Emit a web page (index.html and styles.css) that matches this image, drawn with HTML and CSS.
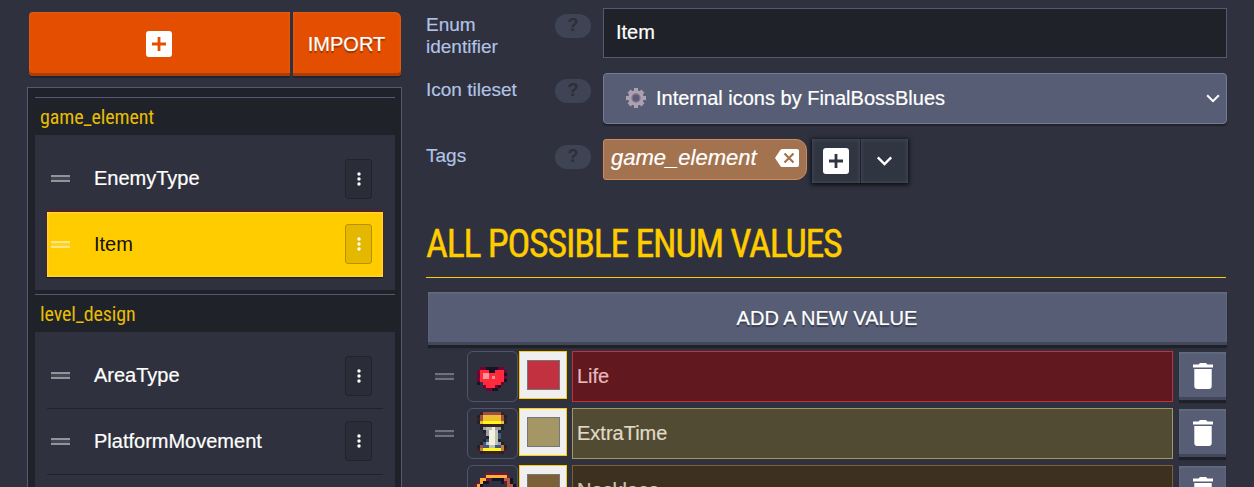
FILE: index.html
```html
<!DOCTYPE html>
<html lang="en">
<head>
<meta charset="utf-8">
<title>Enums</title>
<link rel="stylesheet" href="styles.css">
</head>
<body>
<svg class="defs" width="0" height="0">
  <symbol id="add" viewBox="0 0 26 26"><path fill-rule="evenodd" d="M3 0H23a3 3 0 0 1 3 3V23a3 3 0 0 1-3 3H3a3 3 0 0 1-3-3V3A3 3 0 0 1 3 0ZM11.6 6v5.6H6v2.8h5.6V20h2.8v-5.6H20v-2.8h-5.6V6Z"/></symbol>
  <symbol id="dots" viewBox="0 0 4 14"><circle cx="2" cy="2" r="1.7"/><circle cx="2" cy="7" r="1.7"/><circle cx="2" cy="12" r="1.7"/></symbol>
  <symbol id="trash" viewBox="0 0 20 26"><path d="M0 1.5h5.5L7 0h6l1.500 1.500H20V4.500H0ZM1.300 6H18.700V23a3 3 0 0 1-3 3H4.300a3 3 0 0 1-3-3Z"/></symbol>
  <symbol id="chevron" viewBox="0 0 16 10"><path d="M1.300 1.300 8 8 14.700 1.300" fill="none" stroke="#fff" stroke-width="2.400"/></symbol>
</svg>
<main class="page">
  <aside class="side">
    <div class="actions">
      <button class="btn orange create"><svg width="26" height="26"><use href="#add"/></svg></button>
      <button class="btn orange import">IMPORT</button>
    </div>
    <div class="enum-list">
      <section class="group">
        <h3><span>game_element</span></h3>
        <ul>
          <li class="plain"><i class="grip"></i><span>EnemyType</span><b class="more"><svg width="4" height="14"><use href="#dots"/></svg></b></li>
          <li class="active"><i class="grip"></i><span>Item</span><b class="more"><svg width="4" height="14"><use href="#dots"/></svg></b></li>
        </ul>
      </section>
      <section class="group">
        <h3><span>level_design</span></h3>
        <ul>
          <li><i class="grip"></i><span>AreaType</span><b class="more"><svg width="4" height="14"><use href="#dots"/></svg></b></li>
          <li class="tall"><i class="grip"></i><span>PlatformMovement</span><b class="more"><svg width="4" height="14"><use href="#dots"/></svg></b></li>
          <li><i class="grip"></i><span></span><b class="more"></b></li>
        </ul>
      </section>
    </div>
  </aside>
  <section class="detail">
    <div class="form">
      <label>Enum identifier</label><span class="help">?</span>
      <div class="input">Item</div>
      <label>Icon tileset</label><span class="help">?</span>
      <div class="select">
        <svg class="gear" width="20" height="20" viewBox="-10 -10 20 20">
          <g fill="#aca0b1"><path d="M-2-10H2V10H-2ZM-10-2V2H10V-2Z"/><path d="M-2.200-9.800H2.200V9.800H-2.200ZM-9.800-2.200V2.200H9.800V-2.200Z" transform="rotate(45)"/><circle r="7.800"/></g>
          <circle r="3.900" fill="#565d74" stroke="#81718a" stroke-width="1.500"/>
        </svg>
        <span>Internal icons by FinalBossBlues</span>
        <svg class="arrow" width="14" height="9"><use href="#chevron"/></svg>
      </div>
      <label class="tags-label">Tags</label><span class="help tags-help">?</span>
      <div class="tags">
        <div class="tag"><span>game_element</span><svg width="24" height="18" viewBox="0 0 24 18"><path fill="#fff" d="M7 0H22a2 2 0 0 1 2 2V16a2 2 0 0 1-2 2H7Q6 18 5 16.500L0 9 5 1.500Q6 0 7 0Z"/><path d="m9.500 4.500 9 9m0-9-9 9" stroke="#a3734f" stroke-width="2.200"/></svg></div>
        <div class="tag-buttons"><b><svg width="26" height="26"><use href="#add"/></svg></b><b><svg width="17" height="10"><use href="#chevron"/></svg></b></div>
      </div>
    </div>
    <h2><span>ALL POSSIBLE ENUM VALUES</span></h2>
    <button class="btn slate add-value">ADD A NEW VALUE</button>
    <div class="values">
      <div class="value life"><i class="grip"></i><div class="icon" data-sprite="heart"></div><div class="swatch"><i></i></div><div class="name">Life</div><div class="btn slate delete"><svg width="20" height="26"><use href="#trash"/></svg></div></div>
      <div class="value time"><i class="grip"></i><div class="icon" data-sprite="hourglass"></div><div class="swatch"><i></i></div><div class="name">ExtraTime</div><div class="btn slate delete"><svg width="20" height="26"><use href="#trash"/></svg></div></div>
      <div class="value necklace"><i class="grip"></i><div class="icon" data-sprite="necklace"></div><div class="swatch"><i></i></div><div class="name">Necklace</div><div class="btn slate delete"><svg width="20" height="26"><use href="#trash"/></svg></div></div>
    </div>
  </section>
</main>
<script src="sprites.js"></script>
</body>
</html>
```
FILE: styles.css
```css
* { box-sizing: border-box; }
body { margin: 0; width: 1254px; height: 487px; overflow: hidden; background: #2f323e; color: #fff; font: 20px/22px "Liberation Sans", Arial, sans-serif; -webkit-text-stroke: .2px; }
h2, h3, ul { margin: 0; padding: 0; font-weight: normal; list-style: none; }
svg { display: block; flex: none; fill: #fff; }
.defs { position: absolute; }
.page { display: flex; gap: 24px; height: 487px; padding-left: 27px; overflow: hidden; }
.side { flex: none; width: 375px; padding-top: 12px; }
.actions { display: flex; gap: 3px; padding: 0 1px 0 2px; margin-bottom: 11px; }

.btn { display: flex; align-items: center; justify-content: center; padding: 0; border: 0; color: #fff; font: inherit; text-shadow: 0 2px 1px rgba(0,0,0,.35); }
.orange { height: 64px; background: #e44e00; box-shadow: inset 0 -3px #ab3d08, inset 0 0 3px rgba(255,255,255,.15), 0 2px rgba(0,0,0,.25); }
.slate { background: #565d74; box-shadow: inset 0 -3px #424759, inset 0 1px 3px rgba(160,185,190,.25), 0 3px 1px rgba(20,22,27,.6); }
.create { width: 261px; padding-right: 2px; border-radius: 4px 0 0 4px; }
.import { width: 108px; padding-right: 1px; border-radius: 0 6px 4px 0; }

.enum-list { height: 450px; padding: 9px 6px 0 7px; border: 1px solid #565972; background: #1f2329; }
.group { margin-bottom: 4px; }
.group h3 { height: 38px; padding: 8px 0 0 5px; border-top: 1px solid #565972; color: #e8bd05; font: 20px/22px "Roboto Condensed", Roboto, sans-serif; font-stretch: 75%; letter-spacing: -.1px; -webkit-text-stroke: 0; }
.group ul { padding: 12px; background: #2f323e; }
.group li { display: flex; align-items: flex-start; height: 65px; padding: 12px 11px 0 4px; border-bottom: 1px solid #1f2329; }
.group li span { flex: 1; margin: 8px 0 0 24px; }
.group li.plain { border: 0; }
.group li.tall { height: 66px; }
.group li.tall span, .group li.active span { margin-top: 9px; }
.group li.active { margin-bottom: 1px; background: #fc0; color: #111; border: 0; box-shadow: inset 0 0 3px #ffe680, 0 -1px 2px #7c1414, 0 1px 1px #1b1c20; -webkit-text-stroke: 0; }
.grip { flex: none; width: 19px; height: 7px; border: solid #92949c; border-width: 2px 0; background: #454853; }
.group .grip { margin-top: 16px; }
.group .tall .grip, .group .active .grip { margin-top: 17px; }
.active .grip { border-color: #ffe680; background: #ffd226; }
.more { display: flex; align-items: center; justify-content: center; width: 27px; height: 40px; border: 1px solid #22242c; border-radius: 3px; background: #2a2d37; }
.active .more { border-color: #b69200; background: #e5b800; }

.detail { width: 801px; padding-top: 8px; }
.form { display: grid; grid-template-columns: 129px 48px 624px; grid-template-rows: 65px 65px 68px; align-items: start; }
.form label { width: 100px; padding-top: 6px; color: #b4c3e6; font-size: 19px; -webkit-text-stroke: .15px; }
.help { width: 36px; height: 24px; margin-top: 6px; border-radius: 12px; background: #3e4453; color: #2b2f3a; font-weight: bold; font-size: 18px; line-height: 22px; text-align: center; -webkit-text-stroke: 0; }
.form .tags-label { margin-top: 1px; }
.form .tags-help { margin-top: 7px; }
.input { height: 50px; padding: 12px; border: 1px solid #565972; background: #1f2329; }
.select { display: flex; align-items: center; height: 51px; padding: 0 6px 1px 22px; border: 1px solid #727c9a; border-radius: 4px; background: #565d74; box-shadow: 0 2px 1px #20222a; }
.select span { flex: 1; margin-left: 10px; }
.tags { display: flex; gap: 5px; }
.tag { display: flex; align-items: center; width: 204px; height: 41px; margin-top: 1px; padding: 0 7px 3px 7px; border: 1px solid #c98d66; border-radius: 3px 11px 11px 3px; background: #a3734f; font-size: 22px; font-style: italic; }
.tag span { flex: 1; }
.tag-buttons { display: flex; height: 44px; margin-top: 1px; background: #20222a; box-shadow: 0 1px 4px 1px #0d0e12; }
.tag-buttons b { display: flex; align-items: center; justify-content: center; width: 48px; background: #2f3541; box-shadow: inset 0 0 4px #4a5162; }
.tag-buttons b + b { border-left: 1px solid #20222a; }

h2 { height: 72px; margin-right: 1px; padding-top: 18px; border-bottom: 1px solid #fc0; color: #fc0; font: 38px/40px "Roboto Condensed", Roboto, sans-serif; font-stretch: 75%; letter-spacing: -1.27px; white-space: nowrap; -webkit-text-stroke: .4px; }
.add-value { width: 799px; height: 53px; margin: 14px 0 6px 2px; padding: 0 1px 2px 0; }
.value { display: flex; height: 51px; margin-bottom: 6px; padding-left: 9px; }
.value .grip { align-self: center; margin-right: 13px; border-color: #6f727c; background: #3b3e49; }
.icon { width: 51px; height: 51px; border: 1px solid #4f556c; border-radius: 6px; }
.swatch { width: 48px; height: 48px; margin: 0 5px 0 1px; padding: 8px 6px 8px 7px; border: 1px solid #fc0; background: #efefef; }
.swatch i { display: block; height: 30px; border: 1px solid #777; background: var(--tone); }
.name { width: 601px; padding: 13px 4px; border: 1px solid var(--tone); background: var(--fill); color: var(--text); }
.delete { width: 47px; height: 48px; margin: 1px 0 0 6px; }
.life { --tone: #c23140; --fill: #61191f; --text: #e8b9be; }
.time { --tone: #a59765; --fill: #524b33; --text: #e0dac8; }
.necklace { --tone: #7c6037; --fill: #3e301f; --text: #d0c4b2; }
```
FILE: sprites.js
```js
// 16x16 sprites, one letter per pixel, listed as [column, row, lines].
const palette = {
  M: '#780032', D: '#141426', R: '#ff2a3c', P: '#ff9494',
  B: '#9c5045', K: '#401f20', G: '#f0bd2e', Y: '#fff81c', S: '#1e242b',
  W: '#f1f1e1', C: '#bdc3b2', A: '#9aa19f', U: '#46557b', O: '#c77c40',
  V: '#641e3c', F: '#ffaf36', T: '#b75c43'
};
const sprites = {
  heart: [3, 5, ['.MMDDDDMM.', 'MRRRDDRRRM', 'MRPPRRRRRD', 'MRPPRPRRRM', 'MRRRRRRRRD', 'D.RRRRRRM.', '..MRRRMD..', '...MMDD...']],
  hourglass: [3, 1, ['.KBBBBBBK.', 'SBGGGGGGBS', 'KBGGGGGGBK', 'SGYYYYYYGS', '.SKKKKKKS.', '.SACCWAAS.', '..SAWWCS..', '...AWWCU..', '...SWWCU..', '..SUWWCS..', '.SUCWWCAS.', 'SBUUCCUUOS', 'KOYYYYYYOK', '.SKKKKKKS.']],
  necklace: [2, 2, ['....VVVVVVV...', '...VFFFFFFFV..', '..FFVVDDDDTTD.', '.VFDD....DVTD.', 'VFD........TTD', 'FVD........VTD', 'FD..........TD']]
};
document.querySelectorAll('[data-sprite]').forEach(box => {
  const [col, row, lines] = sprites[box.dataset.sprite];
  const cells = lines.flatMap((line, y) => [...line].map((c, x) =>
    c === '.' ? '' : `<rect x="${col + x}" y="${row + y}" width="1" height="1" fill="${palette[c]}"/>`));
  box.innerHTML = `<svg width="48" height="48" viewBox="0 0 16 16" shape-rendering="crispEdges">${cells.join('')}</svg>`;
});
```
